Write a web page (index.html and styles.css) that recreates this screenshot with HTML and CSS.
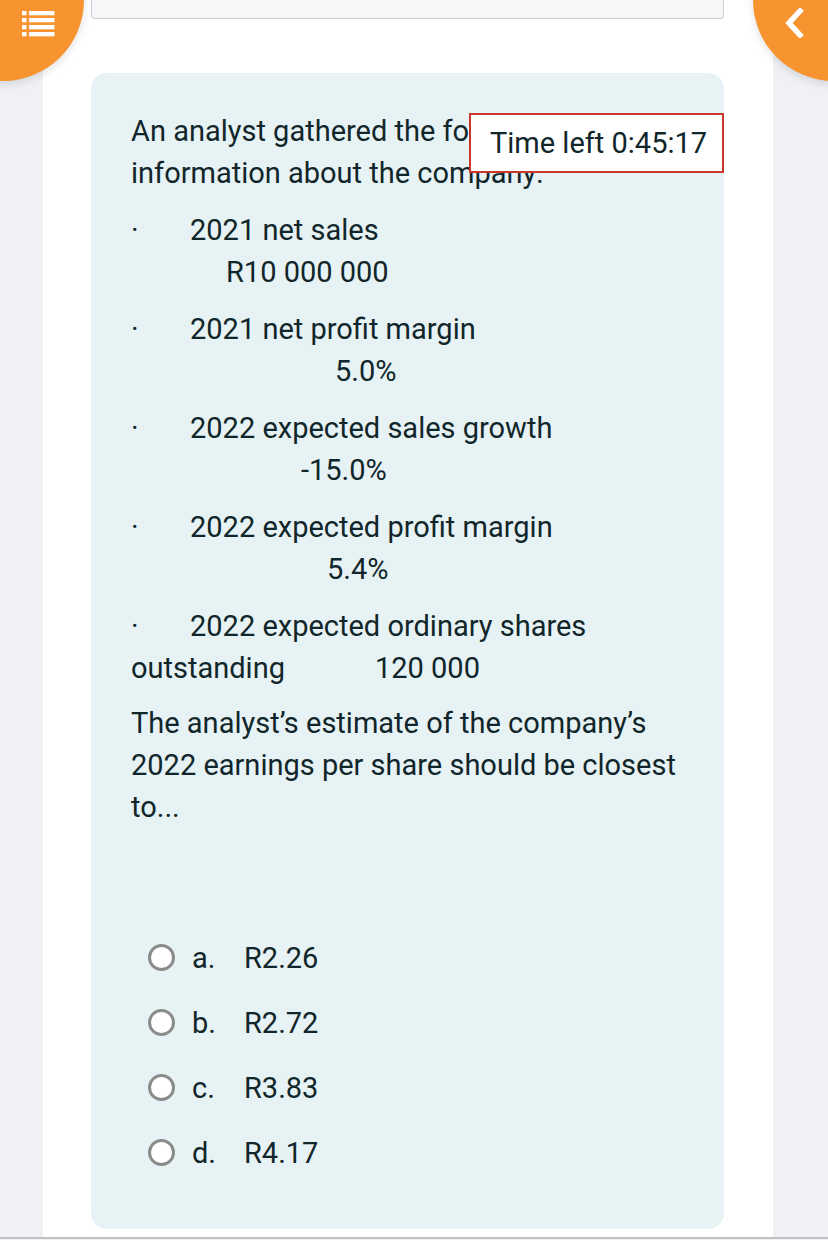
FILE: index.html
```html
<!DOCTYPE html>
<html>
<head>
<meta charset="utf-8">
<link rel="stylesheet" href="styles.css">
</head>
<body>
<div class="page">
  <div class="topbox"></div>
  <div class="card">
    <p class="para">An analyst gathered the following information about the company:</p>
    <div class="item">
      <div class="row"><span class="dot">·</span><span>2021 net sales</span></div>
      <div class="val" style="padding-left:95px">R10 000 000</div>
    </div>
    <div class="item">
      <div class="row"><span class="dot">·</span><span>2021 net profit margin</span></div>
      <div class="val" style="padding-left:204px">5.0%</div>
    </div>
    <div class="item">
      <div class="row"><span class="dot">·</span><span>2022 expected sales growth</span></div>
      <div class="val" style="padding-left:170px">-15.0%</div>
    </div>
    <div class="item">
      <div class="row"><span class="dot">·</span><span>2022 expected profit margin</span></div>
      <div class="val" style="padding-left:196px">5.4%</div>
    </div>
    <div class="item last">
      <div class="row"><span class="dot">·</span><span>2022 expected ordinary shares</span></div>
      <div class="val">outstanding<span class="gap"></span>120 000</div>
    </div>
    <p class="para">The analyst’s estimate of the company’s 2022 earnings per share should be closest to...</p>
    <div class="answers">
      <div class="opt"><span class="radio"></span><span class="letter">a.</span><span>R2.26</span></div>
      <div class="opt"><span class="radio"></span><span class="letter">b.</span><span>R2.72</span></div>
      <div class="opt"><span class="radio"></span><span class="letter">c.</span><span>R3.83</span></div>
      <div class="opt"><span class="radio"></span><span class="letter">d.</span><span>R4.17</span></div>
    </div>
  </div>
</div>
<div class="footline"></div>

<div class="fab fab-left">
  <svg class="list-icon" width="33" height="26" viewBox="0 0 33 26">
    <rect x="0" y="0" width="4.5" height="4.3" fill="#fff"/>
    <rect x="7" y="0" width="25.5" height="4.3" fill="#fff"/>
    <rect x="0" y="7" width="4.5" height="4.3" fill="#fff"/>
    <rect x="7" y="7" width="25.5" height="4.3" fill="#fff"/>
    <rect x="0" y="14" width="4.5" height="4.3" fill="#fff"/>
    <rect x="7" y="14" width="25.5" height="4.3" fill="#fff"/>
    <rect x="0" y="21" width="4.5" height="4.3" fill="#fff"/>
    <rect x="7" y="21" width="25.5" height="4.3" fill="#fff"/>
  </svg>
</div>
<div class="fab fab-right">
  <svg class="chev" width="22" height="30" viewBox="0 0 22 30">
    <path d="M16 3 L5 15 L16 27" fill="none" stroke="#fff" stroke-width="5.5" stroke-linecap="square" stroke-linejoin="miter"/>
  </svg>
</div>
<div class="timer">Time left 0:45:17</div>
</body>
</html>
```

FILE: styles.css
```css
html, body {
  margin: 0;
  padding: 0;
  overflow: hidden;
}
body {
  background: #eff1f5;
  height: 1240px;
  font-family: Roboto, "Liberation Sans", sans-serif;
  color: #11262a;
}
.page {
  width: 730px;
  margin-left: 43px;
  background: #ffffff;
  height: 1237px;
  padding: 0 49px 0 48px;
  box-sizing: border-box;
}
.topbox {
  height: 18px;
  background: #f5f7f9;
  border: 1.5px solid #c9cfd6;
  border-top: none;
  border-radius: 0 0 4px 4px;
}
.card {
  margin-top: 54px;
  height: 1156px;
  box-sizing: border-box;
  background: #e6f2f4;
  border-radius: 16px;
  padding: 37px 40px;
  font-size: 29px;
  line-height: 42px;
}
.para {
  margin: 0 0 15px 0;
}
.item {
  margin-bottom: 15px;
}
.item.last {
  margin-bottom: 13px;
}
.row {
  display: flex;
}
.dot {
  width: 59px;
  flex: none;
}
.gap {
  display: inline-block;
  width: 90px;
}
.answers {
  margin-top: 97px;
}
.opt {
  height: 65px;
  display: flex;
  align-items: center;
  padding-left: 17px;
}
.radio {
  width: 21px;
  height: 21px;
  border: 3px solid #8b8b8b;
  border-radius: 50%;
  background: #fff;
  margin-right: 17px;
  flex: none;
}
.letter {
  width: 52px;
}
.footline {
  height: 2px;
  background: #c2c2c2;
}
.fab {
  position: absolute;
  width: 162px;
  height: 162px;
  border-radius: 50%;
  background: #f79430;
  box-shadow: 0 3px 8px rgba(0,0,0,0.12);
}
.fab-left {
  left: -78px;
  top: -81px;
}
.fab-right {
  left: 753px;
  top: -81px;
}
.list-icon {
  position: absolute;
  left: 100px;
  top: 92px;
}
.chev {
  position: absolute;
  left: 31px;
  top: 89px;
}
.timer {
  position: absolute;
  left: 469px;
  top: 113px;
  width: 255px;
  height: 60px;
  box-sizing: border-box;
  background: #fff;
  border: 2px solid #c9392b;
  font-size: 29px;
  line-height: 56px;
  padding-left: 19px;
  color: #11262a;
}
```
